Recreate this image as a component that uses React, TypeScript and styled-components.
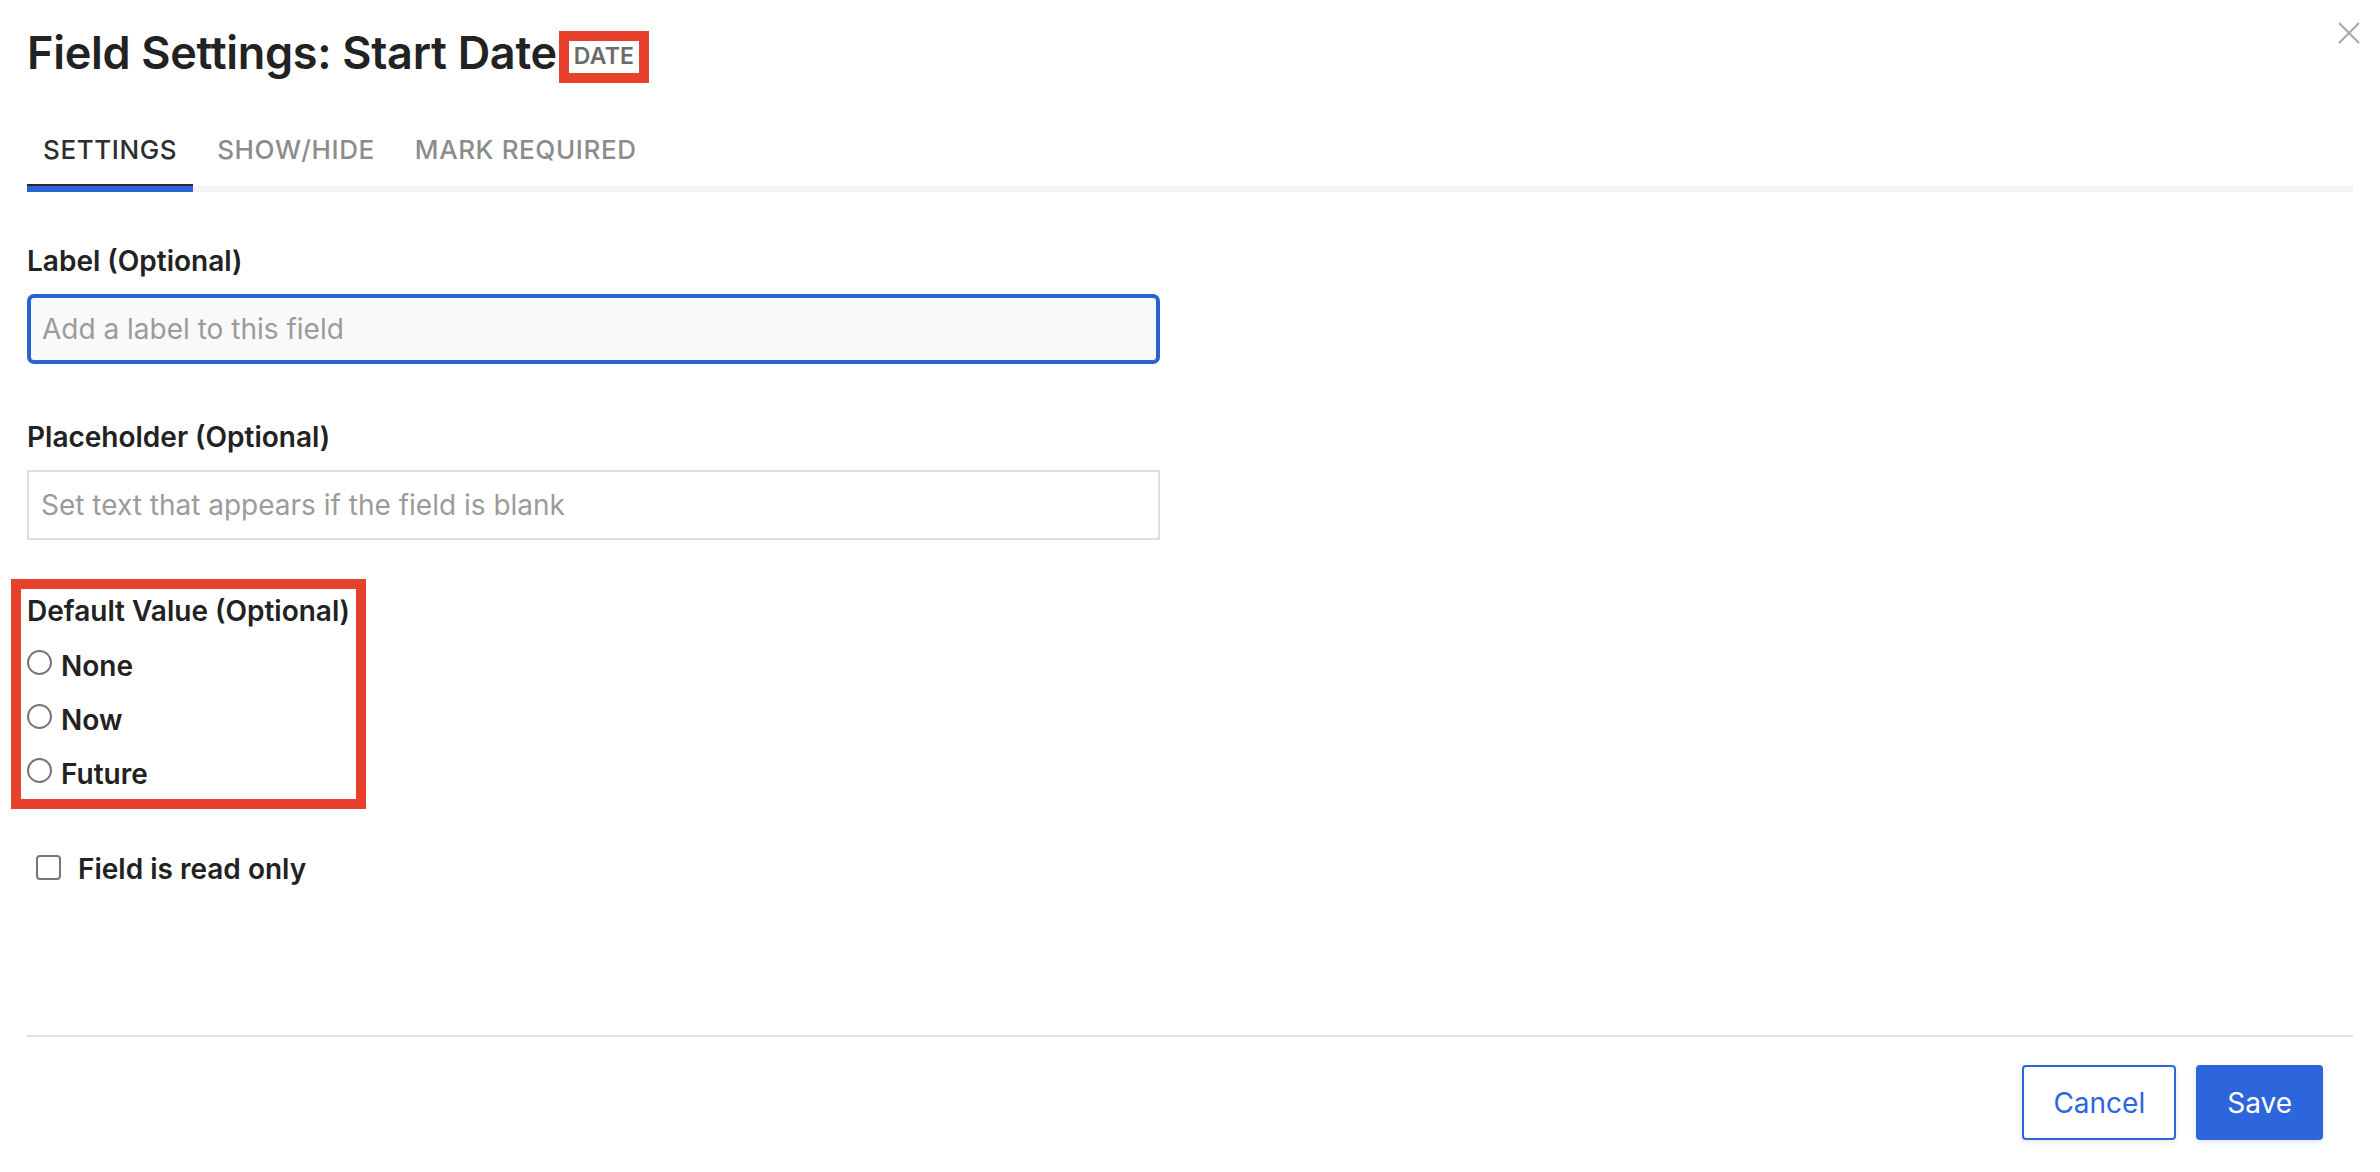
import React from "react";
import styled, { createGlobalStyle } from "styled-components";

const GlobalStyle = createGlobalStyle`
  html, body {
    margin: 0;
    padding: 0;
    background: #ffffff;
  }
  body {
    font-family: Inter, "Noto Sans", "Liberation Sans", sans-serif;
    color: #222222;
  }
  * { box-sizing: border-box; }
`;

const Dialog = styled.div`
  position: relative;
  min-height: 100vh;
  display: flex;
  flex-direction: column;
  background: #ffffff;
`;

const Body = styled.div`
  flex: 1;
  padding: 25px 27px 0;
`;

const Header = styled.div`
  display: flex;
  align-items: flex-start;
`;

const Title = styled.h1`
  margin: 0;
  font-size: 45px;
  line-height: 56px;
  font-weight: 600;
  letter-spacing: -0.3px;
  color: #222222;
`;

const TypeBadge = styled.span`
  margin: 6px 0 0 2px;
  border: 10px solid #e8412b;
  padding: 0 5px 2px;
  font-size: 23px;
  line-height: 30px;
  font-weight: 600;
  color: #6b6b6b;
  letter-spacing: 0.2px;
`;

const CloseButton = styled.button`
  position: absolute;
  top: 22px;
  right: 20px;
  width: 22px;
  height: 22px;
  padding: 0;
  border: none;
  background: transparent;
  cursor: pointer;
  display: flex;
`;

const TabBar = styled.div`
  margin-top: 51px;
  display: flex;
  gap: 8px;
  box-shadow: inset 0 -6px 0 #f2f2f2;
`;

const Tab = styled.button<{ $active?: boolean }>`
  padding: 0 16px 20px;
  border: none;
  border-bottom: 6px solid ${(p) => (p.$active ? "#2b64da" : "transparent")};
  box-shadow: ${(p) => (p.$active ? "inset 0 -2px 0 #2a2a2a" : "none")};
  background: transparent;
  font-family: inherit;
  font-size: 26px;
  line-height: 32px;
  font-weight: 500;
  letter-spacing: 0.6px;
  color: ${(p) => (p.$active ? "#2e2e2e" : "#8c8c8c")};
  cursor: pointer;
`;

const Form = styled.form`
  margin-top: 53px;
  display: flex;
  flex-direction: column;
  align-items: flex-start;
`;

const Field = styled.div`
  display: flex;
  flex-direction: column;
  gap: 16px;
  & + & {
    margin-top: 57px;
  }
`;

const FieldLabel = styled.label`
  font-size: 28px;
  line-height: 33px;
  font-weight: 600;
  color: #222222;
`;

const TextInput = styled.input<{ $focused?: boolean }>`
  width: 1133px;
  height: 70px;
  margin: 0;
  padding: 0 0 0 ${(p) => (p.$focused ? "11px" : "12px")};
  border: ${(p) => (p.$focused ? "4px solid #2a62cf" : "2px solid #dedede")};
  border-radius: ${(p) => (p.$focused ? "7px" : "0")};
  background: ${(p) => (p.$focused ? "#f9f9f9" : "#ffffff")};
  font-family: inherit;
  font-size: 28px;
  color: #222222;
  outline: none;
  &::placeholder {
    color: #9b9b9b;
  }
`;

const DefaultGroup = styled.fieldset`
  margin: 39px 0 0 -16px;
  width: fit-content;
  min-width: 0;
  border: 10px solid #e8412b;
  padding: 6px 6px 9px 6px;
  display: flex;
  flex-direction: column;
  gap: 22px;
`;

const GroupLegend = styled.div`
  font-size: 28px;
  line-height: 33px;
  font-weight: 600;
  color: #222222;
`;

const OptionRow = styled.label`
  display: flex;
  align-items: flex-start;
  gap: 9px;
  font-size: 28px;
  line-height: 32px;
  font-weight: 600;
  color: #222222;
  cursor: pointer;
`;

const Radio = styled.input.attrs({ type: "radio" })`
  appearance: none;
  -webkit-appearance: none;
  margin: 0;
  width: 25px;
  height: 25px;
  flex-shrink: 0;
  border: 2px solid #767676;
  border-radius: 50%;
  background: #ffffff;
`;

const CheckRow = styled.label`
  margin-top: 44px;
  padding-left: 9px;
  display: flex;
  align-items: flex-start;
  gap: 17px;
  font-size: 28px;
  line-height: 32px;
  font-weight: 600;
  color: #222222;
  cursor: pointer;
`;

const Checkbox = styled.input.attrs({ type: "checkbox" })`
  appearance: none;
  -webkit-appearance: none;
  margin: 2px 0 0;
  width: 25px;
  height: 25px;
  flex-shrink: 0;
  border: 2px solid #767676;
  border-radius: 4px;
  background: #ffffff;
`;

const Footer = styled.div`
  margin: 0 27px;
  border-top: 2px solid #e2e2e2;
  padding: 28px 30px 32px 0;
  display: flex;
  justify-content: flex-end;
  gap: 20px;
`;

const Button = styled.button<{ $primary?: boolean }>`
  height: 75px;
  padding: 0 29px;
  border: 2px solid #2d66dc;
  border-radius: 4px;
  background: ${(p) => (p.$primary ? "#2d66dc" : "#ffffff")};
  color: ${(p) => (p.$primary ? "#ffffff" : "#2d66dc")};
  font-family: inherit;
  font-size: 28px;
  font-weight: 400;
  box-shadow: 0 2px 6px rgba(0, 0, 0, 0.1);
  cursor: pointer;
`;

const CloseIcon = () => (
  <svg width="22" height="22" viewBox="0 0 22 22" fill="none">
    <line x1="1" y1="1" x2="21" y2="21" stroke="#a8a8a8" strokeWidth="2" />
    <line x1="21" y1="1" x2="1" y2="21" stroke="#a8a8a8" strokeWidth="2" />
  </svg>
);

const defaultOptions = ["None", "Now", "Future"];

export default function App() {
  return (
    <>
      <GlobalStyle />
      <Dialog>
        <CloseButton aria-label="Close">
          <CloseIcon />
        </CloseButton>
        <Body>
          <Header>
            <Title>Field Settings: Start Date</Title>
            <TypeBadge>DATE</TypeBadge>
          </Header>
          <TabBar>
            <Tab $active>SETTINGS</Tab>
            <Tab>SHOW/HIDE</Tab>
            <Tab>MARK REQUIRED</Tab>
          </TabBar>
          <Form onSubmit={(e) => e.preventDefault()}>
            <Field>
              <FieldLabel>Label (Optional)</FieldLabel>
              <TextInput $focused placeholder="Add a label to this field" />
            </Field>
            <Field>
              <FieldLabel>Placeholder (Optional)</FieldLabel>
              <TextInput placeholder="Set text that appears if the field is blank" />
            </Field>
            <DefaultGroup>
              <GroupLegend>Default Value (Optional)</GroupLegend>
              {defaultOptions.map((o) => (
                <OptionRow key={o}>
                  <Radio name="default-value" />
                  {o}
                </OptionRow>
              ))}
            </DefaultGroup>
            <CheckRow>
              <Checkbox />
              Field is read only
            </CheckRow>
          </Form>
        </Body>
        <Footer>
          <Button>Cancel</Button>
          <Button $primary>Save</Button>
        </Footer>
      </Dialog>
    </>
  );
}
